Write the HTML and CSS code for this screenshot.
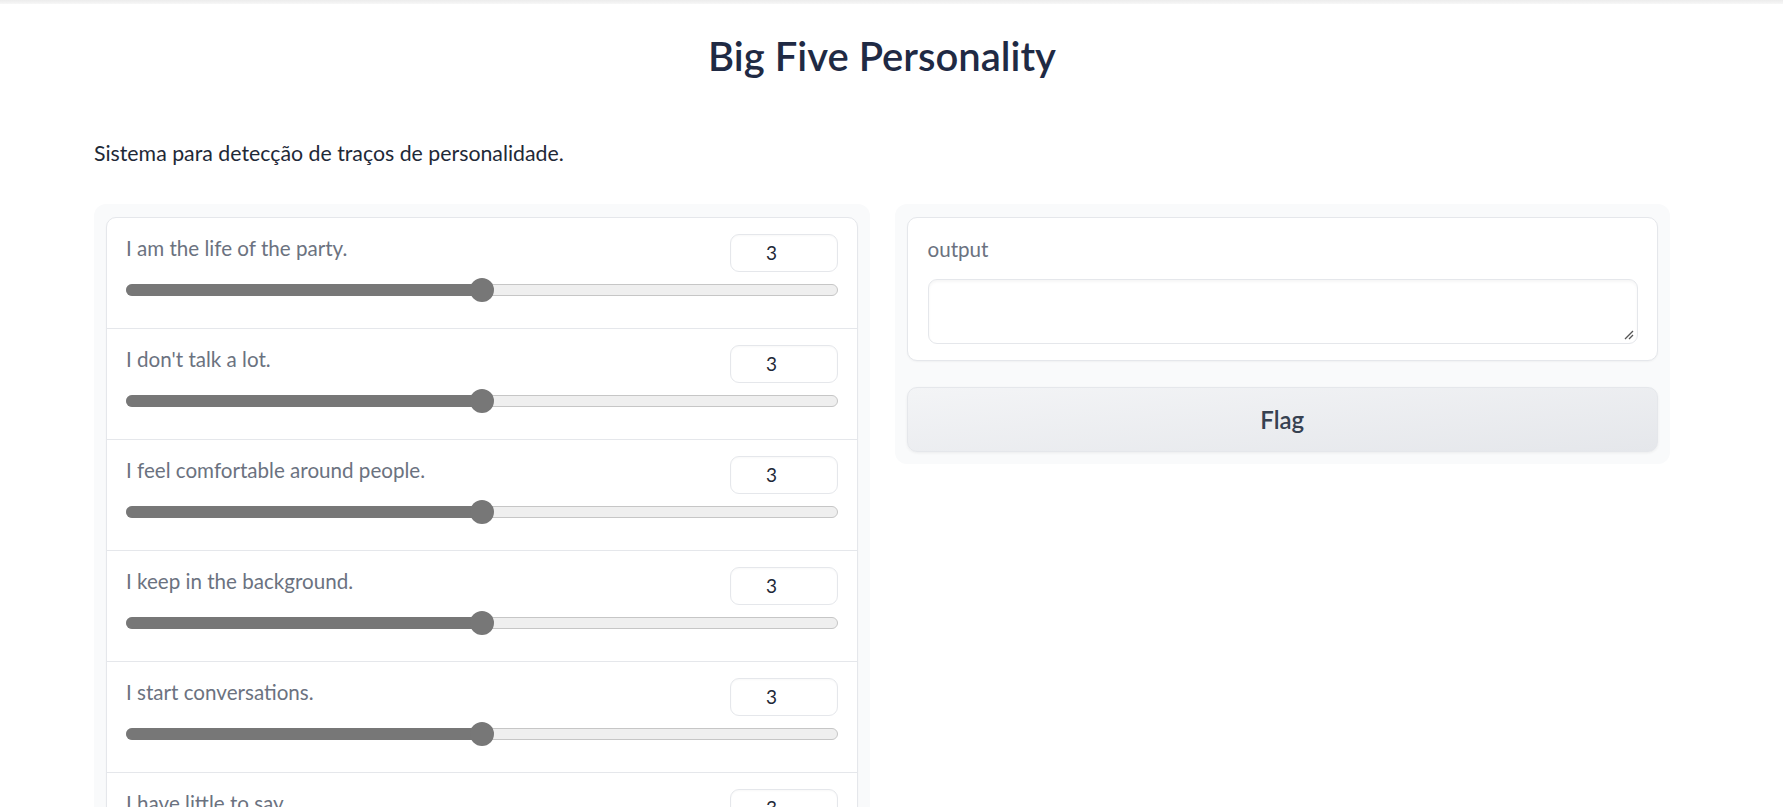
FILE: index.html
```html
<!DOCTYPE html>
<html lang="pt">
<head>
<meta charset="utf-8">
<title>Big Five Personality</title>
<link rel="stylesheet" href="styles.css">
</head>
<body>
<div class="topbar"></div>
<div class="page">
  <h1 class="title">Big Five Personality</h1>
  <p class="description">Sistema para detecção de traços de personalidade.</p>
  <div class="columns">
    <div class="panel">
      <div class="card">
        <div class="row">
          <div class="row-head"><span class="label">I am the life of the party.</span><div class="number">3</div></div>
          <div class="slider"><div class="track"><div class="fill" style="width:50%"></div></div><div class="thumb" style="left:50%"></div></div>
        </div>
        <div class="row">
          <div class="row-head"><span class="label">I don't talk a lot.</span><div class="number">3</div></div>
          <div class="slider"><div class="track"><div class="fill" style="width:50%"></div></div><div class="thumb" style="left:50%"></div></div>
        </div>
        <div class="row">
          <div class="row-head"><span class="label">I feel comfortable around people.</span><div class="number">3</div></div>
          <div class="slider"><div class="track"><div class="fill" style="width:50%"></div></div><div class="thumb" style="left:50%"></div></div>
        </div>
        <div class="row">
          <div class="row-head"><span class="label">I keep in the background.</span><div class="number">3</div></div>
          <div class="slider"><div class="track"><div class="fill" style="width:50%"></div></div><div class="thumb" style="left:50%"></div></div>
        </div>
        <div class="row">
          <div class="row-head"><span class="label">I start conversations.</span><div class="number">3</div></div>
          <div class="slider"><div class="track"><div class="fill" style="width:50%"></div></div><div class="thumb" style="left:50%"></div></div>
        </div>
        <div class="row">
          <div class="row-head"><span class="label">I have little to say.</span><div class="number">3</div></div>
          <div class="slider"><div class="track"><div class="fill" style="width:50%"></div></div><div class="thumb" style="left:50%"></div></div>
        </div>
        <div class="row">
          <div class="row-head"><span class="label">I talk to a lot of different people at parties.</span><div class="number">3</div></div>
          <div class="slider"><div class="track"><div class="fill" style="width:50%"></div></div><div class="thumb" style="left:50%"></div></div>
        </div>
      </div>
    </div>
    <div class="panel panel-right">
      <div class="card out-card">
        <span class="label">output</span>
        <div class="textarea"><svg class="grip" width="10" height="10" viewBox="0 0 10 10"><path d="M9 1 L1 9 M9 5 L5 9" stroke="#555" stroke-width="1.3" fill="none"/></svg></div>
      </div>
      <button class="flag">Flag</button>
    </div>
  </div>
</div>
</body>
</html>
```

FILE: styles.css
```css
html, body {
  margin: 0;
  padding: 0;
  background: #ffffff;
  font-family: "Lato", "Liberation Sans", sans-serif;
  overflow: hidden;
}

.topbar {
  height: 4px;
  background: linear-gradient(#ececec, #f7f7f7);
}

.page {
  width: 1576px;
  margin-left: 94px;
}

.title {
  margin: 0;
  padding-top: 30px;
  height: 50px;
  text-align: center;
  font-size: 40px;
  line-height: 44px;
  font-weight: 600;
  color: #1f2a44;
}

.description {
  margin: 0;
  padding-top: 56px;
  font-size: 21.3px;
  line-height: 26px;
  color: #1f2937;
}

.columns {
  display: flex;
  gap: 25px;
  margin-top: 38px;
  align-items: flex-start;
}

.panel {
  flex: 1;
  background: #f9fafb;
  border-radius: 12px;
  padding: 13px 12px 12px 12px;
  display: flex;
  flex-direction: column;
  gap: 26px;
}

.card {
  background: #ffffff;
  border: 1px solid #e5e7eb;
  border-radius: 10px;
  box-shadow: 0 1px 2px rgba(0, 0, 0, 0.04);
}

.row {
  padding: 16px 19px 26px 19px;
  border-bottom: 1px solid #e5e7eb;
}

.row-head {
  display: flex;
  justify-content: space-between;
  align-items: flex-start;
}

.label {
  font-size: 20.6px;
  line-height: 24px;
  color: #6b7280;
  margin-top: 2px;
}

.number {
  width: 108px;
  height: 38px;
  box-sizing: border-box;
  border: 1px solid #e5e7eb;
  border-radius: 9px;
  font-size: 19px;
  line-height: 36px;
  text-align: center;
  padding-right: 24px;
  color: #1f2937;
  box-shadow: inset 0 1px 2px rgba(0, 0, 0, 0.03);
}

.slider {
  position: relative;
  height: 24px;
  margin-top: 6px;
  display: flex;
  align-items: center;
}

.track {
  flex: 1;
  height: 12px;
  box-sizing: border-box;
  border: 1px solid #c6c6c6;
  border-radius: 6px;
  background: #efefef;
  display: flex;
}

.fill {
  background: #777777;
  margin: -1px 0 -1px -1px;
  border-radius: 6px 0 0 6px;
}

.thumb {
  position: absolute;
  top: 0;
  width: 24px;
  height: 24px;
  margin-left: -12px;
  border-radius: 50%;
  background: #777777;
}

.out-card {
  padding: 16px 19px 16px 20px;
  display: flex;
  flex-direction: column;
}

.out-card .label {
  margin-top: 3px;
}

.textarea {
  margin-top: 18px;
  height: 65px;
  box-sizing: border-box;
  border: 1px solid #e5e7eb;
  border-radius: 9px;
  box-shadow: inset 0 2px 3px rgba(0, 0, 0, 0.04);
  display: flex;
  justify-content: flex-end;
  align-items: flex-end;
  padding: 3px;
}

.grip {
  display: block;
}

.flag {
  height: 65px;
  border: 1px solid #e5e7eb;
  border-radius: 10px;
  background: linear-gradient(to bottom right, #f3f4f6, #e5e7eb);
  box-shadow: 0 1px 3px rgba(0, 0, 0, 0.06);
  font-family: "Lato", "Liberation Sans", sans-serif;
  font-size: 24px;
  font-weight: 600;
  color: #374151;
  cursor: pointer;
}
```
